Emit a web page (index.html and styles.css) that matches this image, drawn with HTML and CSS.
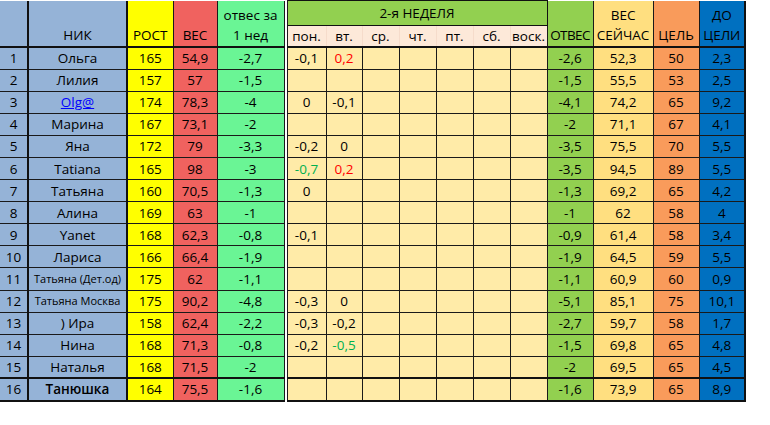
FILE: index.html
```html
<!DOCTYPE html>
<html lang="ru">
<head>
<meta charset="utf-8">
<title>2-я неделя</title>
<link rel="stylesheet" href="styles.css">
</head>
<body>
<table class="sheet">
  <colgroup>
    <col class="w-num"><col class="w-nick"><col class="w-rost"><col class="w-ves"><col class="w-otv1"><col class="w-gap">
    <col class="w-d1"><col class="w-d2"><col class="w-d3"><col class="w-d4"><col class="w-d5"><col class="w-d6"><col class="w-d7">
    <col class="w-otv"><col class="w-now"><col class="w-goal"><col class="w-left">
  </colgroup>
  <thead>
    <tr class="h1">
      <th rowspan="2" class="num"></th>
      <th rowspan="2" class="nick">НИК</th>
      <th rowspan="2" class="rost">РОСТ</th>
      <th rowspan="2" class="ves">ВЕС</th>
      <th rowspan="2" class="otv1">отвес за<br>1 нед</th>
      <th rowspan="2" class="gap"></th>
      <th colspan="7" class="week">2-я НЕДЕЛЯ</th>
      <th rowspan="2" class="otv narrow">ОТВЕС</th>
      <th rowspan="2" class="now">ВЕС<br>СЕЙЧАС</th>
      <th rowspan="2" class="goal">ЦЕЛЬ</th>
      <th rowspan="2" class="left">ДО<br>ЦЕЛИ</th>
    </tr>
    <tr class="h2">
      <th class="day">пон.</th><th class="day">вт.</th><th class="day">ср.</th><th class="day">чт.</th><th class="day">пт.</th><th class="day">сб.</th><th class="day">воск.</th>
    </tr>
  </thead>
  <tbody>
    <tr><td class="num">1</td><td class="nick">Ольга</td><td class="rost">165</td><td class="ves">54,9</td><td class="otv1">-2,7</td><td class="gap"></td><td class="d">-0,1</td><td class="d red">0,2</td><td class="d"></td><td class="d"></td><td class="d"></td><td class="d"></td><td class="d"></td><td class="otv">-2,6</td><td class="now">52,3</td><td class="goal">50</td><td class="left">2,3</td></tr>
    <tr><td class="num">2</td><td class="nick">Лилия</td><td class="rost">157</td><td class="ves">57</td><td class="otv1">-1,5</td><td class="gap"></td><td class="d"></td><td class="d"></td><td class="d"></td><td class="d"></td><td class="d"></td><td class="d"></td><td class="d"></td><td class="otv">-1,5</td><td class="now">55,5</td><td class="goal">53</td><td class="left">2,5</td></tr>
    <tr><td class="num">3</td><td class="nick"><a class="link" href="#">Olg@</a></td><td class="rost">174</td><td class="ves">78,3</td><td class="otv1">-4</td><td class="gap"></td><td class="d">0</td><td class="d">-0,1</td><td class="d"></td><td class="d"></td><td class="d"></td><td class="d"></td><td class="d"></td><td class="otv">-4,1</td><td class="now">74,2</td><td class="goal">65</td><td class="left">9,2</td></tr>
    <tr><td class="num">4</td><td class="nick">Марина</td><td class="rost">167</td><td class="ves">73,1</td><td class="otv1">-2</td><td class="gap"></td><td class="d"></td><td class="d"></td><td class="d"></td><td class="d"></td><td class="d"></td><td class="d"></td><td class="d"></td><td class="otv">-2</td><td class="now">71,1</td><td class="goal">67</td><td class="left">4,1</td></tr>
    <tr><td class="num">5</td><td class="nick">Яна</td><td class="rost">172</td><td class="ves">79</td><td class="otv1">-3,3</td><td class="gap"></td><td class="d">-0,2</td><td class="d">0</td><td class="d"></td><td class="d"></td><td class="d"></td><td class="d"></td><td class="d"></td><td class="otv">-3,5</td><td class="now">75,5</td><td class="goal">70</td><td class="left">5,5</td></tr>
    <tr><td class="num">6</td><td class="nick">Tatiana</td><td class="rost">165</td><td class="ves">98</td><td class="otv1">-3</td><td class="gap"></td><td class="d green">-0,7</td><td class="d red">0,2</td><td class="d"></td><td class="d"></td><td class="d"></td><td class="d"></td><td class="d"></td><td class="otv">-3,5</td><td class="now">94,5</td><td class="goal">89</td><td class="left">5,5</td></tr>
    <tr><td class="num">7</td><td class="nick">Татьяна</td><td class="rost">160</td><td class="ves">70,5</td><td class="otv1">-1,3</td><td class="gap"></td><td class="d">0</td><td class="d"></td><td class="d"></td><td class="d"></td><td class="d"></td><td class="d"></td><td class="d"></td><td class="otv">-1,3</td><td class="now">69,2</td><td class="goal">65</td><td class="left">4,2</td></tr>
    <tr><td class="num">8</td><td class="nick">Алина</td><td class="rost">169</td><td class="ves">63</td><td class="otv1">-1</td><td class="gap"></td><td class="d"></td><td class="d"></td><td class="d"></td><td class="d"></td><td class="d"></td><td class="d"></td><td class="d"></td><td class="otv">-1</td><td class="now">62</td><td class="goal">58</td><td class="left">4</td></tr>
    <tr><td class="num">9</td><td class="nick">Yanet</td><td class="rost">168</td><td class="ves">62,3</td><td class="otv1">-0,8</td><td class="gap"></td><td class="d">-0,1</td><td class="d"></td><td class="d"></td><td class="d"></td><td class="d"></td><td class="d"></td><td class="d"></td><td class="otv">-0,9</td><td class="now">61,4</td><td class="goal">58</td><td class="left">3,4</td></tr>
    <tr><td class="num">10</td><td class="nick">Лариса</td><td class="rost">166</td><td class="ves">66,4</td><td class="otv1">-1,9</td><td class="gap"></td><td class="d"></td><td class="d"></td><td class="d"></td><td class="d"></td><td class="d"></td><td class="d"></td><td class="d"></td><td class="otv">-1,9</td><td class="now">64,5</td><td class="goal">59</td><td class="left">5,5</td></tr>
    <tr><td class="num">11</td><td class="nick small">Татьяна (Дет.од)</td><td class="rost">175</td><td class="ves">62</td><td class="otv1">-1,1</td><td class="gap"></td><td class="d"></td><td class="d"></td><td class="d"></td><td class="d"></td><td class="d"></td><td class="d"></td><td class="d"></td><td class="otv">-1,1</td><td class="now">60,9</td><td class="goal">60</td><td class="left">0,9</td></tr>
    <tr><td class="num">12</td><td class="nick small">Татьяна Москва</td><td class="rost">175</td><td class="ves">90,2</td><td class="otv1">-4,8</td><td class="gap"></td><td class="d">-0,3</td><td class="d">0</td><td class="d"></td><td class="d"></td><td class="d"></td><td class="d"></td><td class="d"></td><td class="otv">-5,1</td><td class="now">85,1</td><td class="goal">75</td><td class="left">10,1</td></tr>
    <tr><td class="num">13</td><td class="nick">) Ира</td><td class="rost">158</td><td class="ves">62,4</td><td class="otv1">-2,2</td><td class="gap"></td><td class="d">-0,3</td><td class="d">-0,2</td><td class="d"></td><td class="d"></td><td class="d"></td><td class="d"></td><td class="d"></td><td class="otv">-2,7</td><td class="now">59,7</td><td class="goal">58</td><td class="left">1,7</td></tr>
    <tr><td class="num">14</td><td class="nick">Нина</td><td class="rost">168</td><td class="ves">71,3</td><td class="otv1">-0,8</td><td class="gap"></td><td class="d">-0,2</td><td class="d green">-0,5</td><td class="d"></td><td class="d"></td><td class="d"></td><td class="d"></td><td class="d"></td><td class="otv">-1,5</td><td class="now">69,8</td><td class="goal">65</td><td class="left">4,8</td></tr>
    <tr><td class="num">15</td><td class="nick">Наталья</td><td class="rost">168</td><td class="ves">71,5</td><td class="otv1">-2</td><td class="gap"></td><td class="d"></td><td class="d"></td><td class="d"></td><td class="d"></td><td class="d"></td><td class="d"></td><td class="d"></td><td class="otv">-2</td><td class="now">69,5</td><td class="goal">65</td><td class="left">4,5</td></tr>
    <tr class="last"><td class="num">16</td><td class="nick bold">Танюшка</td><td class="rost">164</td><td class="ves">75,5</td><td class="otv1">-1,6</td><td class="gap"></td><td class="d"></td><td class="d"></td><td class="d"></td><td class="d"></td><td class="d"></td><td class="d"></td><td class="d"></td><td class="otv">-1,6</td><td class="now">73,9</td><td class="goal">65</td><td class="left">8,9</td></tr>
  </tbody>
</table>
</body>
</html>
```

FILE: styles.css
```css
html, body {
  margin: 0;
  padding: 0;
  background: #ffffff;
}

.sheet {
  border-collapse: collapse;
  table-layout: fixed;
  width: 745px;
  font-family: "Open Sans", "Noto Sans", sans-serif;
  font-size: 13.5px;
  color: #000;
  box-shadow: 0 2px 0 #c9c9c9;
}

.w-num { width: 28px; }
.w-nick { width: 99px; }
.w-rost { width: 46px; }
.w-ves { width: 44px; }
.w-otv1 { width: 67px; }
.w-gap { width: 3px; }
.w-d1 { width: 39px; }
.w-d2 { width: 36px; }
.w-d3 { width: 37px; }
.w-d4 { width: 37px; }
.w-d5 { width: 37px; }
.w-d6 { width: 37px; }
.w-d7 { width: 37px; }
.w-otv { width: 46px; }
.w-now { width: 60px; }
.w-goal { width: 46px; }
.w-left { width: 46px; }

.sheet th,
.sheet td {
  padding: 0;
  text-align: center;
  white-space: nowrap;
  overflow: visible;
  border: 1px solid #1a1a1a;
}

.sheet th {
  font-weight: normal;
  vertical-align: bottom;
  line-height: 20px;
  padding-bottom: 1px;
}

.h1 { height: 25px; }
.h2 { height: 21px; }

.sheet thead tr:first-child th { border-top: none; }
.sheet thead th { border-bottom: 2px solid #111; }

.sheet tbody tr { height: 22.1px; }

.sheet td {
  line-height: 18px;
  vertical-align: middle;
}

.num { background: #95b3d7; border-left: none !important; border-right: 2px solid #111 !important; }
.nick { background: #95b3d7; border-right: 2px solid #111 !important; }
.rost { background: #ffff00; }
.ves { background: #f0625f; }
.otv1 { background: #6af595; }
.gap { background: #ffffff; border-top: none !important; border-bottom: none !important; }
.sheet thead th.gap { border-bottom: none; }

.week {
  background: #92d050;
  border: 1px solid #111 !important;
  vertical-align: middle !important;
  padding-bottom: 0 !important;
}

.day {
  background: #fde9d9;
  border-left: 1px solid #f6dccb !important;
  border-right: 1px solid #f6dccb !important;
  vertical-align: middle !important;
  padding-bottom: 0 !important;
}

.d { background: #ffeba8; }
.otv { background: #92d050; }
.now { background: #ffdf80; }
.goal { background: #f99b5b; }
.left { background: #0070c0; border-right: 2px solid #111 !important; }

.narrow { letter-spacing: -0.6px; }

.small { font-size: 11px; }
.bold { font-weight: 600; }

.red { color: #ff0000; }
.green { color: #00b050; }

.link {
  color: #0000ff;
  text-decoration: underline;
}

.last td {
  border-top: 2px solid #111;
  border-bottom: 2px solid #111;
}
.last td.gap { border-top: none; border-bottom: none; }
```
